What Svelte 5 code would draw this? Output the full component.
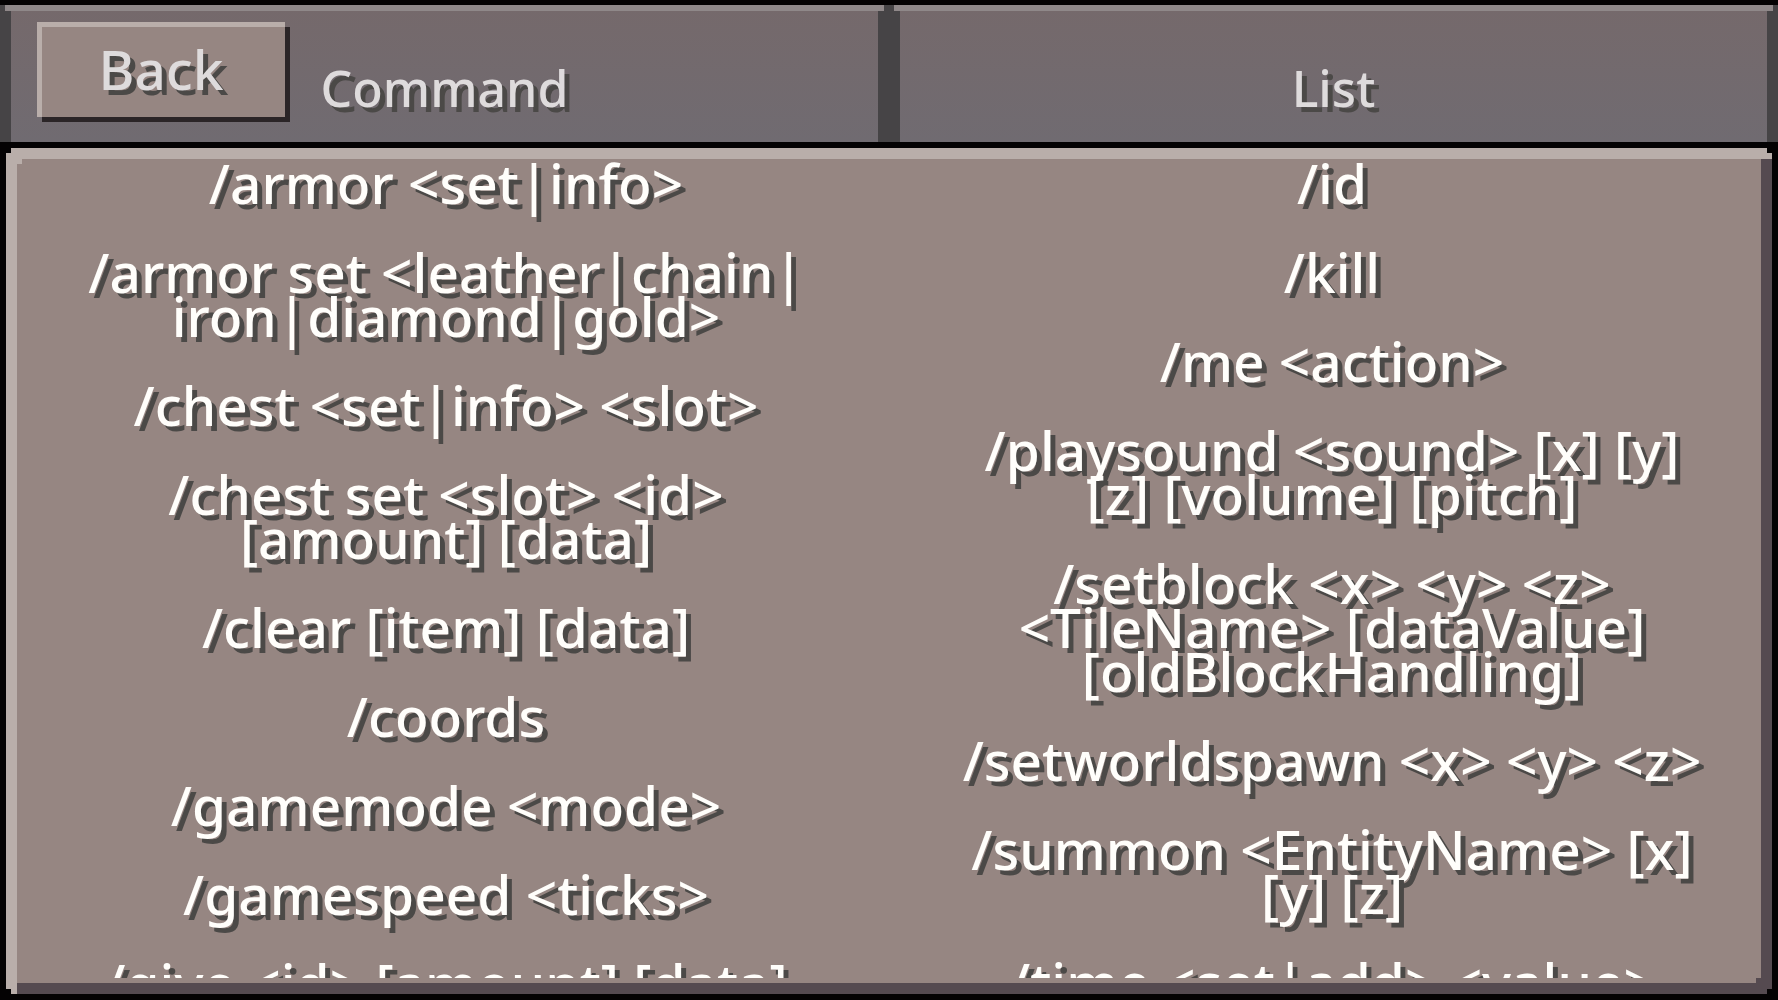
<script>
  let commands = [
    ['/armor <set|info>'],
    ['/armor set <leather|chain|', 'iron|diamond|gold>'],
    ['/chest <set|info> <slot>'],
    ['/chest set <slot> <id>', '[amount] [data]'],
    ['/clear [item] [data]'],
    ['/coords'],
    ['/gamemode <mode>'],
    ['/gamespeed <ticks>'],
    ['/give <id> [amount] [data]']
  ]

  let moreCommands = [
    ['/id'],
    ['/kill'],
    ['/me <action>'],
    ['/playsound <sound> [x] [y]', '[z] [volume] [pitch]'],
    ['/setblock <x> <y> <z>', '<TileName> [dataValue]', '[oldBlockHandling]'],
    ['/setworldspawn <x> <y> <z>'],
    ['/summon <EntityName> [x]', '[y] [z]'],
    ['/time <set|add> <value>']
  ]

  let columns = [commands, moreCommands]
</script>

<div class="screen">
  <header>
    <div class="tab">
      <button type="button">Back</button>
      <h1>Command</h1>
    </div>
    <div class="tab">
      <h1>List</h1>
    </div>
  </header>

  <main>
    <div class="columns">
      {#each columns as column}
        <ul>
          {#each column as lines}
            <li>
              {#each lines as line}
                <span>{line}</span>
              {/each}
            </li>
          {/each}
        </ul>
      {/each}
    </div>
  </main>
</div>

<style>
  :global(body) {
    margin: 0;
    background: #040203;
  }

  .screen {
    --stone: #968682;
    --light: #b9aeaa;
    --dark: #554a50;
    display: flex;
    flex-direction: column;
    height: 100vh;
    box-sizing: border-box;
    padding: 5px 0 6px;
    font-family: "Noto Sans", "Open Sans", sans-serif;
    font-weight: 500;
    color: #fffefb;
    text-shadow: 5px 5px 0 #4b4947;
  }

  header {
    display: grid;
    grid-template-columns: 1fr 1fr;
    gap: 22px;
    padding: 0 11px;
    background: #464446;
    color: #dedbdc;
  }

  .tab {
    position: relative;
    height: 137px;
    background: linear-gradient(#75696b, #706b71);
  }

  /* top highlight pokes out one pixel block on both sides */
  .tab::before {
    content: "";
    position: absolute;
    top: 0;
    left: -6px;
    right: -6px;
    height: 6px;
    background: #8f8889;
  }

  h1 {
    margin: 0;
    padding-top: 61px;
    font-size: 50px;
    font-weight: inherit;
    line-height: 44px;
    text-align: center;
  }

  /* sits over the left tab */
  button {
    position: absolute;
    top: 17px;
    left: 26px;
    width: 248px;
    height: 95px;
    padding: 0 0 2px;
    border: 0;
    background: var(--stone);
    box-shadow: inset 5px 5px 0 var(--light), 5px 5px 0 #2b2527;
    font-family: inherit;
    font-size: 55px;
    font-weight: inherit;
    line-height: 44px;
    color: inherit;
    text-shadow: inherit;
    cursor: pointer;
  }

  main {
    flex: 1;
    display: flex;
    min-height: 0;
    margin: 6px 6px 0;
    padding: 11px 11px 16px;
    background:
      linear-gradient(var(--light), var(--light)) 11px 11px / 5px 5px no-repeat,
      linear-gradient(var(--dark), var(--dark)) right 11px bottom 11px / 5px 5px no-repeat,
      var(--stone);
    box-shadow: inset 11px 11px 0 var(--light), inset -11px -11px 0 var(--dark);
    clip-path: polygon(
      5px 0, calc(100% - 5px) 0, calc(100% - 5px) 5px, 100% 5px,
      100% calc(100% - 5px), calc(100% - 5px) calc(100% - 5px), calc(100% - 5px) 100%, 5px 100%,
      5px calc(100% - 5px), 0 calc(100% - 5px), 0 5px, 5px 5px
    );
  }

  .columns {
    flex: 1;
    display: grid;
    grid-template-columns: 1fr 1fr;
    gap: 28px;
    padding-top: 2px;
    overflow: hidden;
  }

  ul {
    display: flex;
    flex-direction: column;
    gap: 45px;
    margin: 0;
    padding: 0;
    list-style: none;
    text-align: center;
    font-size: 55px;
    line-height: 44px;
    white-space: nowrap;
  }

  span {
    display: block;
  }
</style>
